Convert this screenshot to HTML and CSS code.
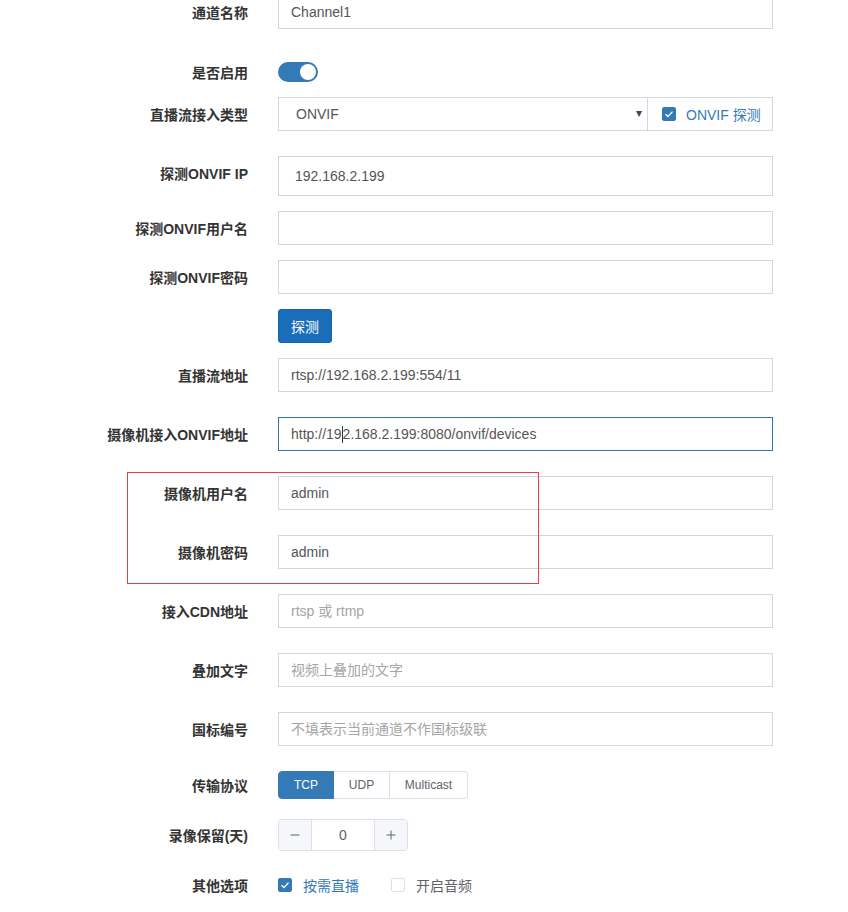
FILE: index.html
```html
<!DOCTYPE html>
<html lang="zh-CN">
<head>
    <meta charset="UTF-8">
    <title>通道设置</title>
    <link rel="stylesheet" href="styles.css">
</head>
<body>
    <!-- 通道表单 -->
    <div class="form">
        <div class="row row-first">
            <label class="label">通道名称</label>
            <div class="control"><input class="input" type="text" value="Channel1"></div>
        </div>

        <div class="row row-switch">
            <label class="label">是否启用</label>
            <div class="control"><span class="switch"><span class="knob"></span></span></div>
        </div>

        <div class="row">
            <label class="label">直播流接入类型</label>
            <div class="control input-group">
                <div class="select">ONVIF<span class="arrow">▾</span></div>
                <div class="addon">
                    <span class="check on">
                        <svg width="14" height="14" viewBox="0 0 14 14"><polyline points="3.5,7.2 6,9.6 10.5,4.6" fill="none" stroke="#fff" stroke-width="1.4"/></svg>
                    </span>
                    <span class="addon-text">ONVIF 探测</span>
                </div>
            </div>
        </div>

        <div class="row tight">
            <label class="label label-up">探测ONVIF IP</label>
            <div class="control"><input class="input input-tall" type="text" value="192.168.2.199"></div>
        </div>

        <div class="row tight">
            <label class="label">探测ONVIF用户名</label>
            <div class="control"><input class="input" type="text"></div>
        </div>

        <div class="row tight">
            <label class="label">探测ONVIF密码</label>
            <div class="control"><input class="input" type="text"></div>
        </div>

        <div class="row tight">
            <label class="label"></label>
            <div class="control"><button class="btn-primary">探测</button></div>
        </div>

        <div class="row">
            <label class="label">直播流地址</label>
            <div class="control"><input class="input" type="text" value="rtsp://192.168.2.199:554/11"></div>
        </div>

        <div class="row">
            <label class="label">摄像机接入ONVIF地址</label>
            <div class="control"><div class="input focus">http://19<span class="caret"></span>2.168.2.199:8080/onvif/devices</div></div>
        </div>

        <!-- 标注框 -->
        <div class="marked">
            <div class="row">
                <label class="label">摄像机用户名</label>
                <div class="control"><input class="input" type="text" value="admin"></div>
            </div>
            <div class="row">
                <label class="label">摄像机密码</label>
                <div class="control"><input class="input" type="text" value="admin"></div>
            </div>
        </div>

        <div class="row">
            <label class="label">接入CDN地址</label>
            <div class="control"><input class="input" type="text" placeholder="rtsp 或 rtmp"></div>
        </div>

        <div class="row">
            <label class="label">叠加文字</label>
            <div class="control"><input class="input" type="text" placeholder="视频上叠加的文字"></div>
        </div>

        <div class="row">
            <label class="label">国标编号</label>
            <div class="control"><input class="input" type="text" placeholder="不填表示当前通道不作国标级联"></div>
        </div>

        <div class="row row-protocol">
            <label class="label">传输协议</label>
            <div class="control">
                <div class="radio-group">
                    <span class="radio-btn active">TCP</span>
                    <span class="radio-btn">UDP</span>
                    <span class="radio-btn">Multicast</span>
                </div>
            </div>
        </div>

        <div class="row row-number">
            <label class="label">录像保留(天)</label>
            <div class="control">
                <div class="number">
                    <span class="num-btn">
                        <svg width="12" height="12" viewBox="0 0 12 12"><line x1="1.5" y1="6" x2="10.5" y2="6" stroke="#606266" stroke-width="1"/></svg>
                    </span>
                    <span class="num-val">0</span>
                    <span class="num-btn">
                        <svg width="12" height="12" viewBox="0 0 12 12"><line x1="1.5" y1="6" x2="10.5" y2="6" stroke="#606266" stroke-width="1"/><line x1="6" y1="1.5" x2="6" y2="10.5" stroke="#606266" stroke-width="1"/></svg>
                    </span>
                </div>
            </div>
        </div>

        <div class="row row-last">
            <label class="label">其他选项</label>
            <div class="control options">
                <span class="option checked">
                    <span class="check on">
                        <svg width="14" height="14" viewBox="0 0 14 14"><polyline points="3.5,7.2 6,9.6 10.5,4.6" fill="none" stroke="#fff" stroke-width="1.4"/></svg>
                    </span>
                    按需直播
                </span>
                <span class="option">
                    <span class="check"></span>
                    开启音频
                </span>
            </div>
        </div>
    </div>
</body>
</html>
```

FILE: styles.css
```css
* {
    box-sizing: border-box;
}

body {
    margin: 0;
    background: #fff;
    font-family: "Liberation Sans", "Noto Sans CJK SC", sans-serif;
    font-size: 14px;
    color: #333;
}

.form {
    width: 773px;
    margin-top: -5px;
}

.row {
    display: flex;
    align-items: center;
    margin-bottom: 25px;
}

.row.tight {
    margin-bottom: 15px;
}

.row-first {
    margin-bottom: 33px;
}

.row-switch {
    height: 20px;
    margin-bottom: 15px;
}

.row-protocol {
    margin-bottom: 20px;
}

.row-number {
    margin-bottom: 24px;
}

.row-last {
    height: 20px;
}

.label {
    width: 248px;
    margin-right: 30px;
    padding-bottom: 1px;
    text-align: right;
    font-weight: bold;
    color: #333;
    flex-shrink: 0;
}

.label-up {
    padding-bottom: 6px;
}

.control {
    flex: 1;
    min-width: 0;
}

/* 输入框 */
.input {
    display: block;
    width: 100%;
    height: 34px;
    padding: 0 12px;
    border: 1px solid #d2d6de;
    border-radius: 0;
    background: #fff;
    font-family: inherit;
    font-size: 14px;
    color: #555;
    outline: none;
}

.input::placeholder {
    color: #a5a5a5;
}

.input-tall {
    height: 40px;
    padding: 0 16px;
}

.input.focus {
    display: flex;
    align-items: center;
    border-color: #3473ad;
}

.caret {
    display: inline-block;
    width: 1px;
    height: 17px;
    background: #333;
}

/* 下拉 + 探测 */
.input-group {
    display: flex;
    height: 34px;
}

.select {
    position: relative;
    width: 370px;
    display: flex;
    align-items: center;
    padding: 0 17px;
    border: 1px solid #d2d6de;
    color: #555;
}

.select .arrow {
    position: absolute;
    right: 5px;
    top: 8px;
    font-size: 12px;
    color: #444;
}

.addon {
    flex: 1;
    display: flex;
    align-items: center;
    padding-left: 14px;
    border: 1px solid #d2d6de;
    border-left: none;
}

.addon-text {
    margin-left: 10px;
    color: #337ab7;
}

/* 开关 */
.switch {
    display: block;
    width: 40px;
    height: 20px;
    border-radius: 10px;
    background: #337ab7;
    padding: 2px;
}

.knob {
    display: block;
    width: 16px;
    height: 16px;
    margin-left: 20px;
    border-radius: 50%;
    background: #fff;
}

/* 按钮 */
.btn-primary {
    display: block;
    width: 54px;
    height: 34px;
    border: 1px solid #0f67b3;
    border-radius: 3px;
    background: #1a6db8;
    color: #fff;
    font-family: inherit;
    font-size: 14px;
    padding: 0;
}

/* 标注 */
.marked {
    position: relative;
}

.marked::after {
    content: "";
    position: absolute;
    left: 127px;
    top: -4px;
    width: 410px;
    height: 110px;
    border: 1px solid #e8403f;
    pointer-events: none;
}

/* 传输协议 */
.radio-group {
    display: flex;
    height: 28px;
}

.radio-btn {
    display: flex;
    align-items: center;
    justify-content: center;
    height: 28px;
    border: 1px solid #dcdfe6;
    border-left: none;
    font-size: 12px;
    color: #606266;
}

.radio-btn:nth-child(1) {
    width: 56px;
    border-left: 1px solid #337ab7;
    border-color: #337ab7;
    border-radius: 4px 0 0 4px;
}

.radio-btn:nth-child(2) {
    width: 56px;
}

.radio-btn:nth-child(3) {
    width: 78px;
    border-radius: 0 4px 4px 0;
}

.radio-btn.active {
    background: #337ab7;
    color: #fff;
}

/* 数字输入 */
.number {
    display: flex;
    width: 130px;
    height: 32px;
    border: 1px solid #dcdfe6;
    border-radius: 4px;
    overflow: hidden;
}

.num-btn {
    width: 32px;
    display: flex;
    align-items: center;
    justify-content: center;
    background: #f5f7fa;
}

.num-val {
    flex: 1;
    display: flex;
    align-items: center;
    justify-content: center;
    border-left: 1px solid #dcdfe6;
    border-right: 1px solid #dcdfe6;
    color: #606266;
}

/* 复选框 */
.check {
    display: inline-block;
    width: 14px;
    height: 14px;
    border: 1px solid #dcdfe6;
    border-radius: 2px;
    background: #fff;
    flex-shrink: 0;
}

.check.on {
    border-color: #337ab7;
    background: #337ab7;
}

.check svg {
    display: block;
    margin: -1px;
}

.options {
    display: flex;
    align-items: center;
}

.option {
    display: flex;
    align-items: center;
    gap: 11px;
    color: #606266;
    margin-right: 32px;
}

.option.checked {
    color: #337ab7;
}
```
